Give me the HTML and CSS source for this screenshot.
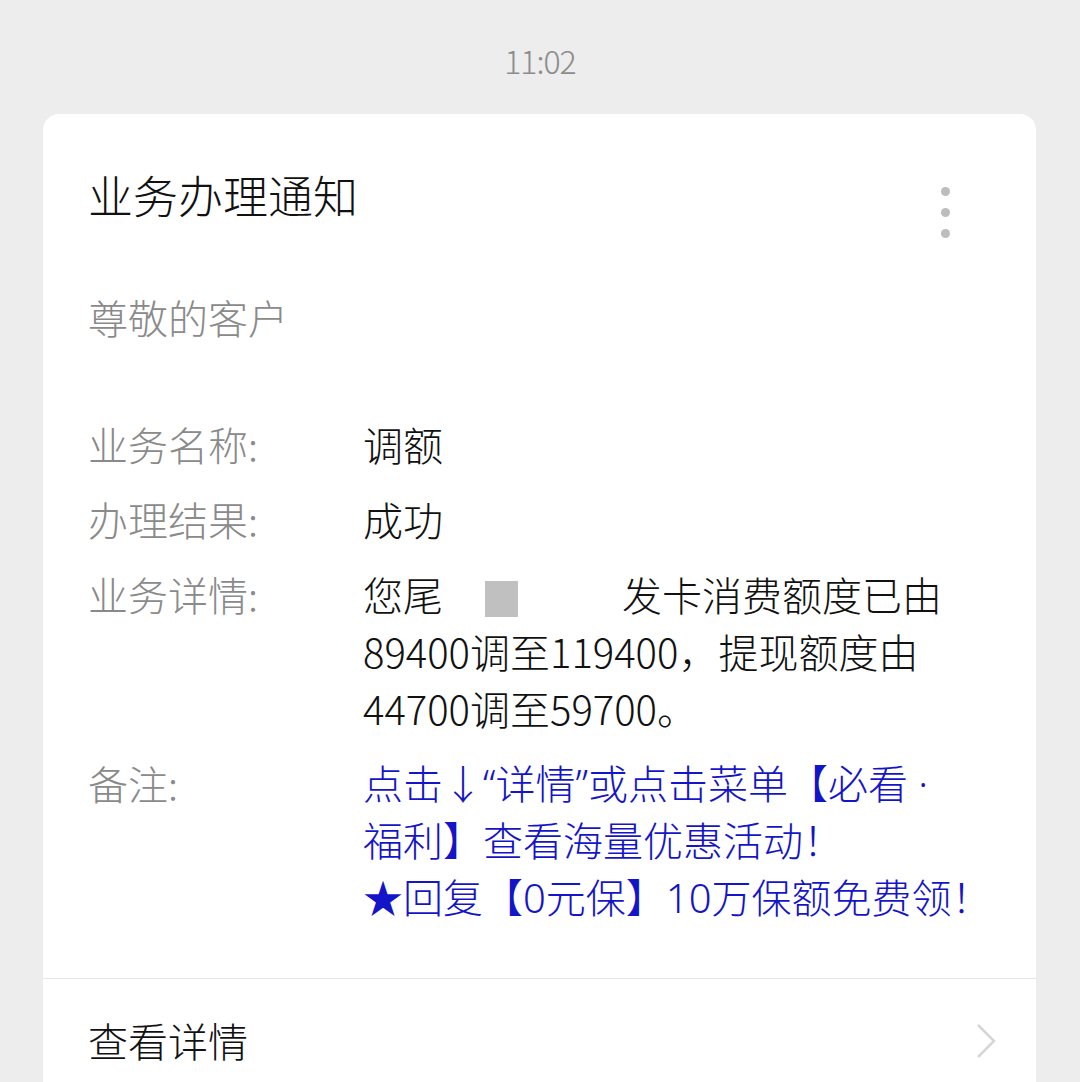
FILE: index.html
```html
<!DOCTYPE html>
<html lang="zh-CN">
<head>
<meta charset="utf-8">
<title>业务办理通知</title>
<link rel="stylesheet" href="styles.css">
</head>
<body>

<div class="time">11:02</div>

<div class="card">
	<div class="card-body">
		<div class="title">业务办理通知</div>
		<div class="more">
			<span class="dot"></span>
			<span class="dot"></span>
			<span class="dot"></span>
		</div>

		<div class="greeting">尊敬的客户</div>

		<div class="rows">
			<div class="row">
				<div class="label">业务名称:</div>
				<div class="value">调额</div>
			</div>
			<div class="row">
				<div class="label">办理结果:</div>
				<div class="value">成功</div>
			</div>
			<div class="row">
				<div class="label">业务详情:</div>
				<div class="value">您尾<span class="masked"><span class="mask-box"></span></span>发卡消费额度已由<br>89400调至119400，提现额度由<br>44700调至59700。</div>
			</div>
			<div class="row">
				<div class="label">备注:</div>
				<div class="value blue">点击↓“详情”或点击菜单【必看 ·<br>福利】查看海量优惠活动！<br>★回复【0元保】10万保额免费领！</div>
			</div>
		</div>
	</div>

	<div class="footer">
		<span>查看详情</span>
		<svg class="chevron" width="24" height="36" viewBox="0 0 24 36">
			<polyline points="4,2 20,18 4,34" fill="none" stroke="#d6d6d6" stroke-width="2.5"/>
		</svg>
	</div>
</div>

</body>
</html>
```

FILE: styles.css
```css
body {
	margin: 0;
	padding: 0;
	background: #ededed;
	font-family: "Noto Sans CJK SC", "Noto Sans", sans-serif;
	font-weight: 300;
	color: #1a1a1a;
}

.time {
	height: 114px;
	line-height: 120px;
	text-align: center;
	font-size: 32px;
	letter-spacing: -1px;
	color: #8c8c8c;
}

.card {
	margin: 0 44px 0 43px;
	background: #fff;
	border-radius: 16px 16px 0 0;
	overflow: hidden;
}

.card-body {
	position: relative;
	padding: 51px 45px 52px 45px;
}

.title {
	font-size: 45px;
	line-height: 60px;
	color: #111;
}

.more {
	position: absolute;
	top: 73px;
	right: 86px;
	display: flex;
	flex-direction: column;
	gap: 12px;
}

.dot {
	width: 9px;
	height: 9px;
	border-radius: 50%;
	background: #bdbdbd;
}

.greeting {
	margin-top: 64px;
	font-size: 40px;
	line-height: 57px;
	color: #8a8a8a;
}

.rows {
	margin-top: 70px;
	display: flex;
	flex-direction: column;
	gap: 18px;
}

.row {
	display: flex;
	font-size: 40px;
	line-height: 57px;
}

.label {
	width: 275px;
	flex-shrink: 0;
	color: #8a8a8a;
}

.value {
	white-space: nowrap;
	color: #111;
}

.blue {
	font-family: "Noto Sans", "Noto Sans CJK SC", sans-serif;
	color: #1414c8;
}

.masked {
	display: inline-block;
	width: 179px;
	height: 40px;
	vertical-align: -6px;
}

.mask-box {
	display: inline-block;
	width: 33px;
	height: 36px;
	margin-left: 42px;
	margin-top: 1px;
	background: #c0c0c0;
}

.footer {
	border-top: 1px solid #e6e6e6;
	padding: 33px 38px 33px 45px;
	display: flex;
	align-items: center;
	justify-content: space-between;
	font-size: 40px;
	line-height: 57px;
	color: #111;
}

.chevron {
	display: block;
}
```
